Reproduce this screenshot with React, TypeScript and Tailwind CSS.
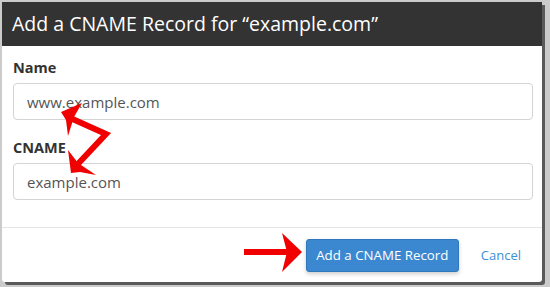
import React from 'react';

const font = { fontFamily: '"Open Sans", "Noto Sans", sans-serif' };

const Field: React.FC<{ label: string; value: string }> = ({ label, value }) => (
    <div className="flex flex-col">
        <label className="text-[14.5px] leading-[20px] font-bold text-[#333]">{label}</label>
        <input
            readOnly
            value={value}
            className="mt-[5px] h-[37px] w-full rounded-[4px] border border-[#d4d4d4] bg-white pl-[13px] text-[15px] text-[#555] outline-none"
            style={font}
        />
    </div>
);

export default function App() {
    return (
        <div className="relative h-[287px] w-[550px] overflow-hidden bg-[#cbcbcb] pl-[2px] pt-[2px]" style={font}>
            <div className="flex h-[280px] w-[540px] flex-col rounded-b-[3px] bg-white shadow-[3px_3px_0_#5a5a5a]">
                <div className="flex h-[44px] items-center bg-[#333333] pl-[10px]">
                    <h1 className="text-[19.5px] text-white">Add a CNAME Record for “example.com”</h1>
                </div>
                <div className="flex flex-col gap-[18px] pb-[27px] pl-[11px] pr-[9px] pt-[12px]">
                    <Field label="Name" value="www.example.com" />
                    <Field label="CNAME" value="example.com" />
                </div>
                <div className="flex flex-1 items-start justify-end border-t border-[#e5e5e5] pr-[21px] pt-[11px]">
                    <button className="h-[33px] w-[153px] rounded-[3px] border border-[#2f78bb] bg-[#3b88d0] text-[13.3px] text-white shadow-[0_2px_4px_rgba(0,0,0,0.2)]">
                        Add a CNAME Record
                    </button>
                    <a className="ml-[22px] mt-[7px] text-[13px] text-[#3d8fd6]">Cancel</a>
                </div>
            </div>

            {/* red annotation arrows */}
            <svg className="pointer-events-none absolute left-0 top-0" width="550" height="287">
                <g fill="none" stroke="#f00000" strokeWidth="6" strokeLinejoin="miter">
                    <polyline points="68,117 106,134 76,166" />
                    <line x1="244" y1="252" x2="288" y2="252" />
                </g>
                <g fill="#f00000">
                    <polygon points="61,112 82,103 74,117 68,136 66,120" />
                    <polygon points="71,173 68,150 78,163 96,175 80,172" />
                    <polygon points="302,252 282,233 287,252 282,272" />
                </g>
            </svg>
        </div>
    );
}
